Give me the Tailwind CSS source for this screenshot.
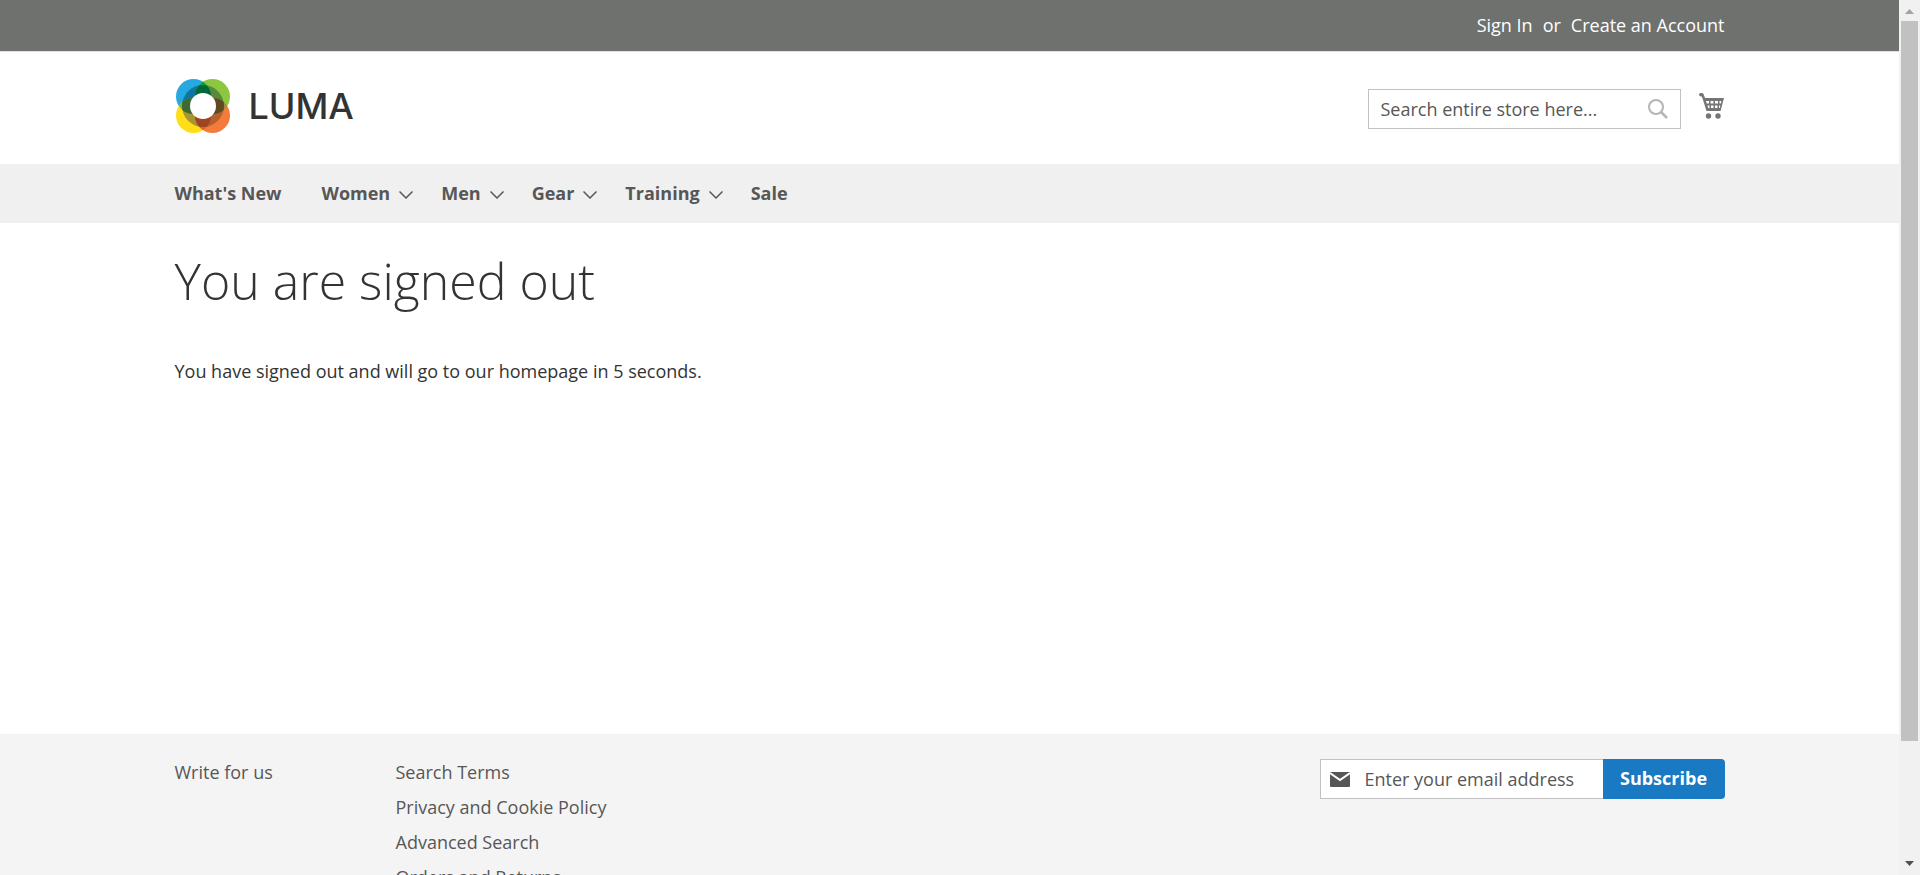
<!DOCTYPE html>
<html lang="en">
<head>
<meta charset="utf-8">
<meta name="viewport" content="width=device-width, initial-scale=1">
<title>You are signed out</title>
<script src="https://cdn.jsdelivr.net/npm/@tailwindcss/browser@4"></script>
</head>
<body class="flex h-screen overflow-hidden bg-white font-['Open_Sans',sans-serif] text-lg text-[#333333]">
<div class="flex min-w-0 flex-1 flex-col overflow-hidden">
  <div class="shrink-0 border-b border-[#e0e0e0] bg-[#6e716e] text-white">
    <div class="mx-auto flex h-[51px] w-full max-w-[1600px] items-center justify-end gap-[10px] px-[25px] pb-0.5">
      <a href="#">Sign In</a><span>or</span><a href="#">Create an Account</a>
    </div>
  </div>
  <header class="mx-auto flex h-28 w-full max-w-[1600px] shrink-0 items-start justify-between px-[25px] pt-[26px]">
    <a href="#" aria-label="Luma" class="flex items-center gap-[18px]">
      <svg class="h-14 w-14" viewBox="0 0 56 56">
        <defs>
          <clipPath id="ring"><circle cx="28" cy="28" r="21"/></clipPath>
          <clipPath id="blue"><circle cx="18.500" cy="18.500" r="17.500"/></clipPath>
          <clipPath id="orange"><circle cx="37.500" cy="37.500" r="17.500"/></clipPath>
        </defs>
        <circle cx="18.500" cy="18.500" r="17.500" fill="#26a9e0"/>
        <circle cx="37.500" cy="18.500" r="17.500" fill="#8dc63f"/>
        <circle cx="18.500" cy="37.500" r="17.500" fill="#ffde17"/>
        <circle cx="37.500" cy="37.500" r="17.500" fill="#f47b3c"/>
        <circle cx="37.500" cy="18.500" r="17.500" fill="#00a14b" clip-path="url(#blue)"/>
        <circle cx="18.500" cy="37.500" r="17.500" fill="#7bb04b" clip-path="url(#blue)"/>
        <circle cx="37.500" cy="18.500" r="17.500" fill="#a68a3a" clip-path="url(#orange)"/>
        <circle cx="18.500" cy="37.500" r="17.500" fill="#f15a29" clip-path="url(#orange)"/>
        <g clip-path="url(#ring)">
          <circle cx="18.500" cy="18.500" r="17.500" fill="#0d76a0"/>
          <circle cx="37.500" cy="18.500" r="17.500" fill="#578a3c"/>
          <circle cx="18.500" cy="37.500" r="17.500" fill="#a89430"/>
          <circle cx="37.500" cy="37.500" r="17.500" fill="#b5612f"/>
          <circle cx="37.500" cy="18.500" r="17.500" fill="#006838" clip-path="url(#blue)"/>
          <circle cx="18.500" cy="37.500" r="17.500" fill="#3b6a34" clip-path="url(#blue)"/>
          <circle cx="37.500" cy="18.500" r="17.500" fill="#604a20" clip-path="url(#orange)"/>
          <circle cx="18.500" cy="37.500" r="17.500" fill="#a04524" clip-path="url(#orange)"/>
        </g>
        <circle cx="28" cy="28" r="13" fill="#fff"/>
      </svg>
      <span class="font-['Inter',sans-serif] text-4xl leading-10 font-medium">LUMA</span>
    </a>
    <div class="mt-[11px] flex items-start gap-[17px]">
      <form class="flex h-10 w-[313px] items-center border border-[#c2c2c2] px-3">
        <input type="text" aria-label="Search" placeholder="Search entire store here..." class="min-w-0 flex-1 outline-none placeholder:text-[#575757]">
        <button type="button" aria-label="Search"><svg class="h-5 w-5" viewBox="0 0 20 20" fill="none" stroke="#b5b5b5" stroke-width="2"><circle cx="8" cy="8" r="7"/><path d="M13 13l6 6" stroke-width="2.500"/></svg></button>
      </form>
      <a href="#" aria-label="My Cart" class="mt-[3px]"><svg class="h-7 w-[27px]" viewBox="0 0 27 28"><g fill="#757575"><path d="M2.500 1Q1 1 1 2.500T2.500 4.200L4 4.700 8.500 19H22.500L26 6H7L5.500 2Q5 1.200 4 1z"/><circle cx="10.500" cy="24" r="2.700"/><circle cx="20" cy="24" r="2.700"/></g><path fill="#fff" d="M8 9h3v2.500H8.700zM12.500 9h3v2.500h-3zM17 9h3v2.500h-3zM21.500 9h2l-.7 2.500h-1.300zM9.500 13.500h2V16h-1.300zM13 13.500h2.500V16H13zM17 13.500h2.500V16H17zM21 13.500h1.300L21.700 16H21z"/></svg></a>
    </div>
  </header>
  <nav class="shrink-0 bg-[#f0f0f0] font-bold text-[#575757]">
    <div class="mx-auto flex h-[59px] w-full max-w-[1600px] items-center px-[25px] pb-0.5">
      <a href="#" class="mr-10">What's New</a>
      <a href="#" class="mr-7 flex items-center gap-[9px]">Women<svg class="mt-1 h-2 w-[14px]" viewBox="0 0 14 8" fill="none" stroke="currentColor" stroke-width="1.500"><path d="M.5.500L7 7 13.500.500"/></svg></a>
      <a href="#" class="mr-7 flex items-center gap-[9px]">Men<svg class="mt-1 h-2 w-[14px]" viewBox="0 0 14 8" fill="none" stroke="currentColor" stroke-width="1.500"><path d="M.5.500L7 7 13.500.500"/></svg></a>
      <a href="#" class="mr-7 flex items-center gap-[9px]">Gear<svg class="mt-1 h-2 w-[14px]" viewBox="0 0 14 8" fill="none" stroke="currentColor" stroke-width="1.500"><path d="M.5.500L7 7 13.500.500"/></svg></a>
      <a href="#" class="mr-7 flex items-center gap-[9px]">Training<svg class="mt-1 h-2 w-[14px]" viewBox="0 0 14 8" fill="none" stroke="currentColor" stroke-width="1.500"><path d="M.5.500L7 7 13.500.500"/></svg></a>
      <a href="#">Sale</a>
    </div>
  </nav>
  <main class="mx-auto h-[511px] w-full max-w-[1600px] shrink-0 px-[25px] pt-[30px]">
    <h1 class="text-[50px] leading-[56px] font-light">You are signed out</h1>
    <p class="mt-12">You have signed out and will go to our homepage in 5 seconds.</p>
  </main>
  <footer class="flex-1 bg-[#f4f4f4] text-[#575757]">
    <div class="mx-auto flex w-full max-w-[1600px] items-start px-[25px] pt-6">
      <a href="#" class="w-[221px]">Write for us</a>
      <ul class="flex flex-1 flex-col gap-[7px]">
        <li><a href="#">Search Terms</a></li>
        <li><a href="#">Privacy and Cookie Policy</a></li>
        <li><a href="#">Advanced Search</a></li>
        <li><a href="#">Orders and Returns</a></li>
      </ul>
      <form class="mt-px flex h-10">
        <div class="flex w-[283px] items-center gap-[15px] border border-r-0 border-[#c2c2c2] bg-white pl-[9px]">
          <svg class="h-[15px] w-5" viewBox="0 0 20 15"><rect width="20" height="15" rx="1" fill="#575757"/><path d="M0 1l10 7 10-7" fill="none" stroke="#fff" stroke-width="2"/></svg>
          <input type="email" aria-label="Email" placeholder="Enter your email address" class="min-w-0 flex-1 outline-none placeholder:text-[#575757]">
        </div>
        <button type="button" class="w-[122px] rounded-r-[4px] bg-[#1979c3] pb-0.5 font-bold text-white">Subscribe</button>
      </form>
    </div>
  </footer>
</div>
<div aria-hidden="true" class="flex w-[21px] shrink-0 flex-col items-center bg-[#f1f1f1]">
  <svg class="h-[21px] w-[21px]" viewBox="0 0 21 21"><path d="M6 14h9l-4.500-5z" fill="#a3a3a3"/></svg>
  <div class="h-[720px] w-[17px] bg-[#c1c1c1]"></div>
  <svg class="mt-auto h-[21px] w-[21px]" viewBox="0 0 21 21"><path d="M6 7h9l-4.500 5z" fill="#505050"/></svg>
</div>
</body>
</html>
